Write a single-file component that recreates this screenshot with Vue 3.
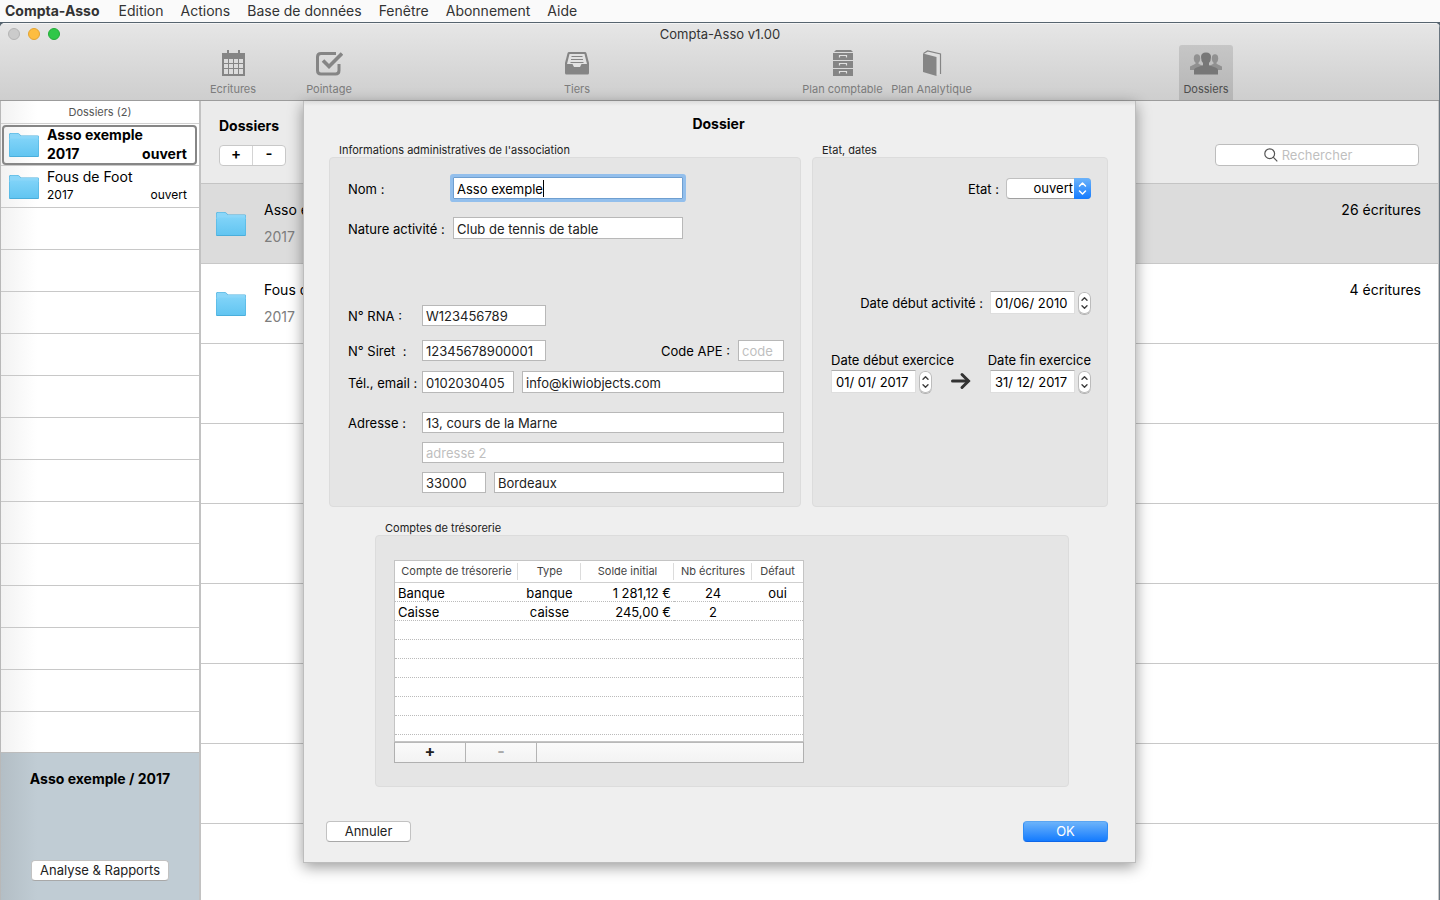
<script setup>
import { ref } from 'vue'

const menus = ['Edition', 'Actions', 'Base de données', 'Fenêtre', 'Abonnement', 'Aide']

const folders = [
  { name: 'Asso exemple', year: '2017', state: 'ouvert', count: '26 écritures' },
  { name: 'Fous de Foot', year: '2017', state: 'ouvert', count: '4 écritures' },
]

const accounts = [
  { name: 'Banque', type: 'banque', balance: '1 281,12 €', entries: '24', main: 'oui' },
  { name: 'Caisse', type: 'caisse', balance: '245,00 €', entries: '2', main: '' },
]

const form = ref({
  name: 'Asso exemple',
  activity: 'Club de tennis de table',
  rna: 'W123456789',
  siret: '12345678900001',
  ape: '',
  phone: '0102030405',
  email: 'info@kiwiobjects.com',
  address1: '13, cours de la Marne',
  address2: '',
  zip: '33000',
  city: 'Bordeaux',
  state: 'ouvert',
  start: '01/06/ 2010',
  from: '01/ 01/ 2017',
  to: '31/ 12/ 2017',
})
const search = ref('')
</script>

<template>
  <div class="screen">
    <svg class="defs" width="0" height="0" aria-hidden="true">
      <defs>
        <linearGradient id="folderFront" x1="0" y1="0" x2="0" y2="1">
          <stop offset="0" stop-color="#80d3f8" />
          <stop offset="1" stop-color="#62c5f1" />
        </linearGradient>
        <symbol id="folder" viewBox="0 0 30 26">
          <path d="M0 24V2.500Q0 1 1.500 1H8.500Q9.500 1 10.200 1.700L12 3.600H28.500Q30 3.600 30 5V24Q30 25 29 25H1Q0 25 0 24Z" fill="#4aaedb" />
          <path d="M.5 8V3Q.5 1.500 2 1.500H8.300Q9.300 1.500 10 2.200L11.800 4.100H28.500Q29.500 4.100 29.500 5.100V8Z" fill="#8bd6f8" />
          <path d="M.5 6.500H29.500V23.500Q29.500 24 29 24H1Q.5 24 .5 23.500Z" fill="url(#folderFront)" />
        </symbol>
        <symbol id="spin" viewBox="0 0 13 22">
          <path d="M4 8.200L6.500 5.700L9 8.200M4 13.800L6.500 16.300L9 13.800" fill="none" stroke="#3c3c3c" stroke-width="1.400" stroke-linecap="round" stroke-linejoin="round" />
        </symbol>
      </defs>
    </svg>

    <nav class="menubar">
      <button class="menu app">Compta-Asso</button>
      <button v-for="m in menus" :key="m" class="menu">{{ m }}</button>
    </nav>

    <div class="window">
      <header class="titlebar">
        <div class="lights"><i class="off"></i><i class="amber"></i><i class="green"></i></div>
        <h1>Compta-Asso v1.00</h1>
        <div class="toolbar">
          <div class="group spaced">
            <button class="tool medium">
              <svg width="28" height="28" viewBox="0 0 28 28"><g fill="#858585"><path d="M3 4H26V27H3Z" /><path d="M8 1H10V5H8ZM19 1H21V5H19Z" /></g><g fill="#dcdcdc"><path d="M5 10H9V14H5ZM10 10H14V14H10ZM15 10H19V14H15ZM20 10H24V14H20ZM5 15H9V19H5ZM10 15H14V19H10ZM15 15H19V19H15ZM20 15H24V19H20ZM5 20H9V25H5ZM10 20H14V25H10ZM15 20H19V25H15ZM20 20H24V25H20Z" /></g></svg>
              <span>Ecritures</span>
            </button>
            <button class="tool medium">
              <svg width="28" height="28" viewBox="0 0 28 28" fill="none" stroke="#858585"><path d="M21 4.500H6Q2.500 4.500 2.500 8V21.500Q2.500 25 6 25H20.500Q24 25 24 21.500V15" stroke-width="3" /><path d="M8 11.500L14 17.500L27 4.500" stroke-width="3.600" /></svg>
              <span>Pointage</span>
            </button>
          </div>
          <button class="tool small">
            <svg width="28" height="28" viewBox="0 0 28 28"><path d="M6 3H22Q23 3 23.400 4L26 14V24Q26 25.500 24.500 25.500H3.500Q2 25.500 2 24V14L4.600 4Q5 3 6 3Z" fill="#858585" /><path d="M6.500 5H21.500L24 15H18.500L17 18H11L9.500 15H4Z" fill="#e2e2e2" /><path d="M8.500 7.500H19.500M8 10.500H20M7.500 13.500H20.500" stroke="#858585" stroke-width="1" /></svg>
            <span>Tiers</span>
          </button>
          <div class="group">
            <button class="tool large">
              <svg width="28" height="28" viewBox="0 0 28 28"><path d="M7 1H22L24 3H5ZM4 4H24V11H4ZM4 12H24V19H4ZM4 20H24V27H4Z" fill="#858585" /><path d="M10.500 8.500V6.500H17.500V8.500M10.500 16.500V14.500H17.500V16.500M10.500 24.500V22.500H17.500V24.500" fill="none" stroke="#e0e0e0" stroke-width="1.200" /></svg>
              <span>Plan comptable</span>
            </button>
            <button class="tool large">
              <svg width="28" height="28" viewBox="0 0 28 28"><path d="M5 4.500L9 2.500L23 5V25L18 26Z" fill="#dedede" /><path d="M5 4.500L18.500 8V27L5 23Z" fill="#858585" /><path d="M5.500 4.500L9.500 2L22.500 5V25" fill="none" stroke="#858585" stroke-width="1.200" /></svg>
              <span>Plan Analytique</span>
            </button>
          </div>
          <button class="tool medium active">
            <svg width="32" height="28" viewBox="0 0 32 28"><g fill="#919191"><ellipse cx="7" cy="9.500" rx="3.200" ry="4.200" /><ellipse cx="25" cy="9.500" rx="3.200" ry="4.200" /><path d="M0 21V17.500L5.500 14.800V12H8.500V14.800L14 17.500V21ZM32 21V17.500L26.500 14.800V12H23.500V14.800L18 17.500V21Z" /></g><path d="M4 25.500V21Q4 19.500 6 18.800L13 16.300V14Q11 12 11 8Q11 3.500 16 3.500Q21 3.500 21 8Q21 12 19 14V16.300L26 18.800Q28 19.500 28 21V25.500Z" fill="#777" /></svg>
            <span>Dossiers</span>
          </button>
        </div>
      </header>

      <div class="body">
        <aside class="sidebar">
          <div class="side-head">Dossiers (2)</div>
          <ul class="side-list">
            <li v-for="(f, i) in folders" :key="f.name">
              <div class="side-item" :class="{ selected: i === 0 }">
                <svg width="30" height="26"><use href="#folder" /></svg>
                <div class="side-text">
                  <div class="side-name">{{ f.name }}</div>
                  <div class="side-meta"><span>{{ f.year }}</span><span>{{ f.state }}</span></div>
                </div>
              </div>
            </li>
            <li v-for="n in 13" :key="n"></li>
          </ul>
          <div class="side-panel">
            <strong>Asso exemple / 2017</strong>
            <button class="btn report">Analyse &amp; Rapports</button>
          </div>
        </aside>

        <main class="main">
          <div class="main-head">
            <div>
              <h2>Dossiers</h2>
              <div class="segmented"><button aria-label="Ajouter">+</button><button aria-label="Retirer">-</button></div>
            </div>
            <div class="search">
              <svg width="14" height="14" viewBox="0 0 14 14" fill="none" stroke="#555" stroke-width="1.200"><circle cx="5.700" cy="5.700" r="4.900" /><path d="M9.200 9.200L13.300 13.300" /></svg>
              <input v-model="search" type="text" placeholder="Rechercher" aria-label="Rechercher" />
            </div>
          </div>
          <ul class="rows">
            <li v-for="(f, i) in folders" :key="f.name" :class="{ current: i === 0 }">
              <svg width="30" height="26"><use href="#folder" /></svg>
              <div class="row-text"><div>{{ f.name }}</div><div class="year">{{ f.year }}</div></div>
              <span class="count">{{ f.count }}</span>
            </li>
            <li v-for="n in 6" :key="n"></li>
          </ul>
        </main>

        <form class="sheet" @submit.prevent>
          <h2>Dossier</h2>
          <div class="boxes">
            <section class="infos">
              <h3>Informations administratives de l'association</h3>
              <div class="box fields">
                <div class="line wide">
                  <label for="nom">Nom :</label>
                  <div class="focus"><input id="nom" v-model="form.name" type="text" /><i class="caret"></i></div>
                </div>
                <div class="line wide contact">
                  <label for="nature">Nature activité :</label>
                  <input id="nature" v-model="form.activity" class="w-name" type="text" />
                </div>
                <div class="line rna">
                  <label for="rna">N° RNA :</label>
                  <input id="rna" v-model="form.rna" class="w-id" type="text" />
                </div>
                <div class="line">
                  <label for="siret">N° Siret&nbsp; :</label>
                  <input id="siret" v-model="form.siret" class="w-id" type="text" />
                  <label class="ape" for="ape">Code APE :</label>
                  <input id="ape" v-model="form.ape" class="w-code" type="text" placeholder="code" />
                </div>
                <div class="line tel">
                  <label for="tel">Tél., email :</label>
                  <input id="tel" v-model="form.phone" class="w-tel" type="text" />
                  <input v-model="form.email" class="grow" type="text" aria-label="Email" />
                </div>
                <div class="line">
                  <label for="adr">Adresse :</label>
                  <input id="adr" v-model="form.address1" class="grow" type="text" />
                </div>
                <div class="line indent">
                  <input v-model="form.address2" class="grow" type="text" placeholder="adresse 2" aria-label="Adresse 2" />
                </div>
                <div class="line indent">
                  <input v-model="form.zip" class="w-zip" type="text" aria-label="Code postal" />
                  <input v-model="form.city" class="grow" type="text" aria-label="Ville" />
                </div>
              </div>
            </section>

            <section class="dates">
              <h3>Etat, dates</h3>
              <div class="box status">
                <div class="right-line">
                  <label for="etat">Etat :</label>
                  <div class="popup">
                    <select id="etat" v-model="form.state"><option>ouvert</option><option>fermé</option></select>
                    <span class="popup-arrow"><svg width="17" height="21" viewBox="0 0 17 21" fill="none" stroke="#fff" stroke-width="1.500" stroke-linecap="round" stroke-linejoin="round"><path d="M5.500 8L8.500 5L11.500 8M5.500 13L8.500 16L11.500 13" /></svg></span>
                  </div>
                </div>
                <div class="right-line start">
                  <label for="debut">Date début activité :</label>
                  <div class="date"><input id="debut" v-model="form.start" type="text" /><button type="button" class="stepper" aria-label="Changer la date"><svg width="13" height="22"><use href="#spin" /></svg></button></div>
                </div>
                <div class="period">
                  <div class="bound">
                    <label for="de">Date début exercice</label>
                    <div class="date"><input id="de" v-model="form.from" type="text" /><button type="button" class="stepper" aria-label="Changer la date"><svg width="13" height="22"><use href="#spin" /></svg></button></div>
                  </div>
                  <svg class="arrow" width="20" height="18" viewBox="0 0 20 18" fill="none" stroke="#333" stroke-width="3"><path d="M1.500 9H17" stroke-linecap="round" /><path d="M11 2.500L17.500 9L11 15.500" stroke-linecap="round" /></svg>
                  <div class="bound end">
                    <label for="a">Date fin exercice</label>
                    <div class="date"><input id="a" v-model="form.to" type="text" /><button type="button" class="stepper" aria-label="Changer la date"><svg width="13" height="22"><use href="#spin" /></svg></button></div>
                  </div>
                </div>
              </div>
            </section>
          </div>

          <section class="treasury">
            <h3>Comptes de trésorerie</h3>
            <div class="box accounts">
              <div class="grid">
                <table>
                  <colgroup><col class="c1" /><col class="c2" /><col class="c3" /><col class="c4" /><col class="c5" /></colgroup>
                  <thead>
                    <tr><th>Compte de trésorerie</th><th>Type</th><th>Solde initial</th><th>Nb écritures</th><th>Défaut</th></tr>
                  </thead>
                  <tbody>
                    <tr v-for="a in accounts" :key="a.name">
                      <td>{{ a.name }}</td><td>{{ a.type }}</td><td>{{ a.balance }}</td><td>{{ a.entries }}</td><td>{{ a.main }}</td>
                    </tr>
                    <tr v-for="n in 6" :key="n"><td colspan="5"></td></tr>
                  </tbody>
                </table>
              </div>
              <div class="grid-foot">
                <button type="button" aria-label="Ajouter un compte">+</button>
                <button type="button" class="dim" aria-label="Retirer un compte">-</button>
              </div>
            </div>
          </section>

          <footer>
            <button type="button" class="btn action">Annuler</button>
            <button type="submit" class="btn action primary">OK</button>
          </footer>
        </form>
      </div>
    </div>
  </div>
</template>

<style>
body { margin: 0; background: #56646f; }
</style>

<style scoped>
.screen, .screen * { box-sizing: border-box; }
.screen {
  height: 100vh;
  display: flex;
  flex-direction: column;
  overflow: hidden;
  font-family: Inter, "Liberation Sans", sans-serif;
  font-size: 13px;
  line-height: 16px;
  color: #000;
}
.defs { position: absolute; }
h1, h2, h3, ul { margin: 0; padding: 0; list-style: none; }
svg { display: block; flex: none; }
button, input, select { font: inherit; color: inherit; margin: 0; border-radius: 0; }
button { padding: 0; border: 0; background: none; }

.menubar {
  flex: none;
  height: 22px;
  display: flex;
  align-items: center;
  gap: 17px;
  padding-left: 5px;
  background: #fafafa;
}
.menu { font-size: 14px; line-height: 20px; color: #333; }
.menu.app { font-weight: 700; margin-right: 2px; }

.window {
  position: relative;
  flex: 1;
  min-height: 0;
  display: flex;
  flex-direction: column;
  margin-top: 1px;
  border-radius: 5px 5px 0 0;
  overflow: hidden;
  background: #fff;
}
.window::after {
  content: "";
  position: absolute;
  inset: 0 0 0 auto;
  width: 1px;
  background: #6a7680;
}
.titlebar {
  position: relative;
  flex: none;
  height: 78px;
  display: flex;
  flex-direction: column;
  border-bottom: 1px solid #9c9c9c;
  border-top: 1px solid #f4f4f4;
  background: linear-gradient(#e6e6e6, #cecece);
}
h1 { font-size: 13px; font-weight: 400; line-height: 20px; height: 21px; text-align: center; color: #333; }
.lights { position: absolute; left: 8px; top: 4px; display: flex; gap: 8px; }
.lights i { width: 12px; height: 12px; border-radius: 50%; }
.off { background: #cbcbcb; border: 1px solid #b4b4b4; }
.amber { background: #fdbd40; border: 1px solid #e3a331; }
.green { background: #2fc748; border: 1px solid #24ab37; }
.toolbar { flex: 1; display: flex; justify-content: space-between; padding: 0 207px 0 206px; }
.group { display: flex; }
.spaced { gap: 42px; }
.tool {
  display: flex;
  flex-direction: column;
  align-items: center;
  height: 55px;
  padding-top: 4px;
  font-size: 11px;
  line-height: 14px;
  color: #7c7c7c;
  white-space: nowrap;
}
.tool span { margin-top: 5px; }
.small { width: 36px; }
.medium { width: 54px; }
.large { width: 89px; }
.active { background: linear-gradient(#c6c6c6, #b5b5b5); color: #4c4c4c; border-radius: 3px 3px 0 0; }

.body { position: relative; flex: 1; min-height: 0; display: flex; }
.sidebar {
  flex: none;
  width: 201px;
  display: flex;
  flex-direction: column;
  border-left: 1px solid #b8b8b8;
  border-right: 2px solid #c2c2c2;
  background: linear-gradient(to right, #f2f2f2, #fff 36px);
}
.side-head {
  flex: none;
  height: 23px;
  border-bottom: 1px solid #d0d0d0;
  font-size: 11px;
  line-height: 22px;
  text-align: center;
  color: #555;
}
.side-list { flex: 1; min-height: 0; overflow: hidden; }
.side-list li { height: 42px; padding: 1px 2px 1px 1px; border-bottom: 1px solid #c8c8c8; }
.side-item {
  height: 40px;
  display: flex;
  align-items: center;
  gap: 8px;
  padding: 0 8px 0 5px;
  border: 2px solid transparent;
  border-radius: 4px;
}
.side-item.selected { border-color: #868686; }
.side-text { flex: 1; padding-bottom: 2px; }
.side-name { font-size: 14px; line-height: 18px; }
.side-meta { display: flex; justify-content: space-between; font-size: 12px; line-height: 18px; }
.selected .side-name, .selected .side-meta { font-size: 14px; line-height: 19px; font-weight: 700; }
.side-panel {
  flex: none;
  height: 148px;
  display: flex;
  flex-direction: column;
  align-items: center;
  justify-content: space-between;
  padding: 17px 0 19px;
  border-top: 1px solid #bcbcbc;
  background: linear-gradient(to right, #b3bec5, #c0ccd4 36px);
}
.side-panel strong { font-size: 14px; line-height: 18px; font-weight: 700; }
.btn {
  height: 21px;
  padding-bottom: 2px;
  border: 1px solid #c2c2c2;
  border-bottom-color: #a8a8a8;
  border-radius: 4px;
  background: #fff;
  line-height: 16px;
  color: #222;
}
.report { width: 138px; }

.main { flex: 1; min-width: 0; display: flex; flex-direction: column; border-right: 2px solid #c8c8c8; }
.main-head {
  flex: none;
  height: 83px;
  display: flex;
  justify-content: space-between;
  padding: 16px 19px 0 18px;
  border-bottom: 1px solid #c4c4c4;
  background: #ebebeb;
}
h2 { font-size: 14px; line-height: 18px; font-weight: 700; }
.segmented {
  width: 67px;
  height: 21px;
  display: flex;
  margin-top: 10px;
  border: 1px solid #c8c8c8;
  border-radius: 4px;
  background: #fff;
}
.segmented button { flex: 1; padding-bottom: 3px; font-size: 15px; line-height: 16px; font-weight: 600; }
.segmented button + button { border-left: 1px solid #d4d4d4; }
.search { position: relative; width: 204px; margin-top: 27px; height: 22px; }
.search svg { position: absolute; left: 49px; top: 4px; }
.search input {
  width: 100%;
  height: 22px;
  border: 1px solid #bdbdbd;
  border-radius: 4px;
  padding: 0;
  text-align: center;
  background: #fff;
}
input::placeholder { color: #bfbfbf; opacity: 1; }
.rows { flex: 1; overflow: hidden; }
.rows li {
  height: 80px;
  display: flex;
  align-items: center;
  gap: 18px;
  padding: 0 17px 0 15px;
  border-bottom: 1px solid #c8c8c8;
  font-size: 14px;
}
.rows .current { background: #dcdcdc; }
.row-text { flex: 1; line-height: 27px; padding-bottom: 2px; }
.year { color: #7d7d7d; }
.count { align-self: flex-start; line-height: 27px; padding-top: 12px; }

.sheet {
  position: absolute;
  top: 0;
  left: calc(50% - 417px);
  width: 833px;
  display: flex;
  flex-direction: column;
  padding: 14px 27px 20px 25px;
  border: 1px solid #bdbdbd;
  border-top: 0;
  background: linear-gradient(#dcdcdc, #efefef 5px);
  box-shadow: 0 4px 14px rgba(0, 0, 0, 0.4);
}
.sheet > h2 { text-align: center; }
h3 { font-size: 11px; line-height: 14px; font-weight: 400; color: #222; padding: 0 0 0 10px; }
.boxes { display: flex; gap: 11px; margin-top: 10px; }
.boxes section { display: flex; flex-direction: column; }
.infos { flex: 1; }
.dates { width: 296px; }
.box { flex: 1; border: 1px solid #dcdcdc; border-radius: 4px; background: #e5e5e5; }
.fields { padding: 19px 16px 13px 18px; display: flex; flex-direction: column; gap: 9px; }
.line { display: flex; align-items: center; gap: 8px; }
.line > label:first-child { width: 66px; white-space: nowrap; }
.line.wide > label:first-child { width: 97px; padding-top: 2px; }
.wide { margin-bottom: 9px; }
.contact { margin-bottom: 57px; }
.rna { margin-bottom: 5px; }
.tel { margin: 1px 0 10px; }
.line.tel > label:first-child { padding-top: 2px; }
.indent { padding-left: 74px; }
.line input {
  width: 0;
  height: 21px;
  border: 1px solid #b8b8b8;
  padding: 0 3px;
  background: #fff;
  outline: 0;
  color: #222;
}
.wide input, .tel input { height: 22px; padding-top: 1px; }
.line .grow { flex: 1; }
.line .w-name { width: 230px; }
.line .w-id { width: 124px; }
.line .w-code { width: 46px; }
.line .w-tel { width: 92px; }
.line .w-zip { width: 64px; }
.ape { margin-left: auto; }
.focus { position: relative; display: flex; width: 230px; }
.line .focus input { width: 100%; border-color: #6f9fd0; box-shadow: 0 0 0 3px #93bfec; border-radius: 1px; color: #000; }
.caret { position: absolute; left: 90px; top: 3px; width: 1px; height: 17px; background: #000; }

.status { padding: 20px 16px 0 18px; }
.right-line { display: flex; justify-content: flex-end; align-items: center; gap: 7px; }
.popup { position: relative; width: 85px; height: 21px; }
.popup select {
  appearance: none;
  width: 100%;
  height: 21px;
  padding: 0 17px 1px 0;
  border: 1px solid #c0c0c0;
  border-bottom-color: #a0a0a0;
  border-radius: 4px;
  background: #fff;
  text-align: right;
  text-align-last: right;
}
.popup-arrow {
  position: absolute;
  right: 0;
  top: 0;
  border-radius: 0 4px 4px 0;
  background: linear-gradient(#6cb3fa, #147bfe);
  pointer-events: none;
}
.start { margin-top: 92px; }
.date { display: flex; align-items: center; gap: 3px; }
.date input {
  width: 85px;
  height: 23px;
  padding: 0 4px;
  border: 1px solid #dedede;
  border-top-color: #b0b0b0;
  background: #fff;
}
.stepper { width: 13px; height: 22px; border-radius: 6px; background: #fff; box-shadow: inset 0 0 0 1px #bcbcbc, 0 1px 0 #b4b4b4; }
.period { display: flex; justify-content: space-between; align-items: flex-end; margin-top: 37px; }
.bound { width: 101px; display: flex; flex-direction: column; }
.bound label { line-height: 19px; white-space: nowrap; }
.end { align-items: flex-end; }
.arrow { margin-bottom: 3px; }

.treasury { width: 694px; margin: 14px 0 0 46px; }
.accounts { height: 252px; padding: 24px 0 0 18px; }
.grid {
  width: 410px;
  height: 182px;
  overflow: hidden;
  border: 1px solid #c4c4c4;
  background: #fff;
}
table { width: 408px; table-layout: fixed; border-collapse: separate; border-spacing: 0; }
.c1 { width: 123px; }
.c2 { width: 63px; }
.c3 { width: 93px; }
.c4 { width: 78px; }
.c5 { width: 51px; }
th {
  height: 22px;
  padding: 0 0 2px;
  border-bottom: 1px solid #cfcfcf;
  font-size: 11px;
  line-height: 18px;
  font-weight: 400;
  color: #444;
  white-space: nowrap;
  background: linear-gradient(#dcdcdc, #dcdcdc) right 2px / 1px 17px no-repeat;
}
th:last-child { background: none; }
td { height: 19px; padding: 2px 3px 0; border-bottom: 1px dotted #bbb; line-height: 16px; text-align: center; white-space: nowrap; }
td:first-child { text-align: left; }
td:nth-child(3) { text-align: right; }
.grid-foot {
  width: 410px;
  height: 21px;
  display: flex;
  border: 1px solid #b0b0b0;
  border-top-color: #b8b8b8;
  background: linear-gradient(#fafafa, #f3f3f3);
}
.grid-foot button { width: 71px; padding-bottom: 3px; border-right: 1px solid #b4b4b4; font-size: 16px; line-height: 16px; font-weight: 700; color: #222; }
.grid-foot .dim { color: #aaa; }

footer { display: flex; justify-content: space-between; margin: 34px 0 0 -3px; }
.action { width: 85px; }
.primary {
  border: 1px solid #2f8cf5;
  border-top-color: #5aa5f2;
  border-bottom-color: #0e66e8;
  background: linear-gradient(#6cb3fa, #147bfe);
  color: #fff;
}
</style>
